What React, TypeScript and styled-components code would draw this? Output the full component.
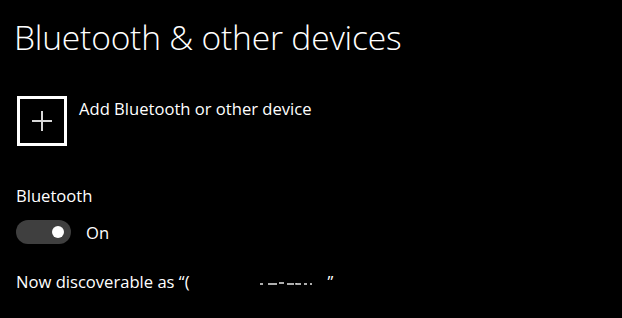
import React from "react";
import styled, { createGlobalStyle } from "styled-components";

const Global = createGlobalStyle`
  html, body { margin: 0; padding: 0; background: #000; }
  body { width: 622px; height: 318px; overflow: hidden; }
`;

const font = `"Open Sans", "Noto Sans", "Liberation Sans", sans-serif`;

const Page = styled.div`
  width: 622px;
  height: 318px;
  background: #000;
  color: #fff;
  font-family: ${font};
  display: flex;
  flex-direction: column;
  padding: 15px 0 0 14px;
  box-sizing: border-box;
`;

const Title = styled.h1`
  margin: 0;
  font-weight: 300;
  font-size: 33.6px;
  line-height: 44px;
  letter-spacing: -0.2px;
  white-space: nowrap;
`;

const AddRow = styled.div`
  display: flex;
  align-items: flex-start;
  gap: 12px;
  margin-top: 37px;
  margin-left: 3px;
`;

const AddBox = styled.div`
  width: 50px;
  height: 50px;
  box-sizing: border-box;
  border: 3px solid #fff;
  display: flex;
  align-items: center;
  justify-content: center;
`;

const AddText = styled.span`
  font-size: 16.6px;
  line-height: 24px;
  margin-top: 1px;
  white-space: nowrap;
`;

const Label = styled.div`
  margin-top: 38px;
  margin-left: 2px;
  font-size: 16.6px;
  line-height: 24px;
`;

const ToggleRow = styled.div`
  display: flex;
  align-items: center;
  gap: 15px;
  margin-top: 11px;
  margin-left: 2px;
`;

const Track = styled.div<{ $on: boolean }>`
  width: 55px;
  height: 24px;
  border-radius: 12px;
  background: #3f3f3f;
  display: flex;
  align-items: center;
  justify-content: ${(p) => (p.$on ? "flex-end" : "flex-start")};
  padding: 0 7px;
  box-sizing: border-box;
`;

const Knob = styled.div`
  width: 12px;
  height: 12px;
  border-radius: 50%;
  background: #fff;
`;

const ToggleText = styled.span`
  font-size: 16.6px;
  line-height: 24px;
  margin-top: 2px;
`;

const Discover = styled.div`
  margin-top: 25px;
  margin-left: 2px;
  font-size: 16.6px;
  line-height: 24px;
  white-space: nowrap;
  display: flex;
  align-items: baseline;
`;

const Gap = styled.span<{ $w: number }>`
  display: inline-block;
  width: ${(p) => p.$w}px;
`;

function PlusIcon() {
  return (
    <svg width="22" height="22" viewBox="0 0 22 22">
      <path d="M11 1 V21 M1 11 H21" stroke="#d8d8d8" strokeWidth="2" fill="none" />
    </svg>
  );
}

function RedactionTraces() {
  return (
    <svg width="54" height="6" viewBox="0 0 54 6">
      <g stroke="#e6e6e6" strokeWidth="1.4">
        <path d="M0 2 H3 M8 2 H17 M19 1 H24 M27 2 H34 M36 1 V2 H41 M44 2 H47 M50 2 H52" />
      </g>
    </svg>
  );
}

export default function App() {
  return (
    <>
      <Global />
      <Page>
        <Title>Bluetooth &amp; other devices</Title>
        <AddRow>
          <AddBox>
            <PlusIcon />
          </AddBox>
          <AddText>Add Bluetooth or other device</AddText>
        </AddRow>
        <Label>Bluetooth</Label>
        <ToggleRow>
          <Track $on>
            <Knob />
          </Track>
          <ToggleText>On</ToggleText>
        </ToggleRow>
        <Discover>
          <span>Now discoverable as “(</span>
          <Gap $w={70} />
          <RedactionTraces />
          <Gap $w={14} />
          <span>”</span>
        </Discover>
      </Page>
    </>
  );
}
